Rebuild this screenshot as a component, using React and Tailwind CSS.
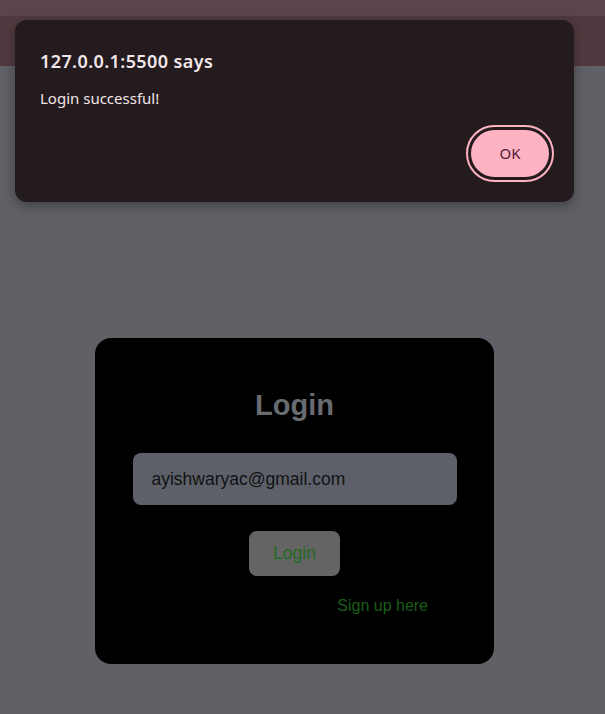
export default function App() {
  return (
    <div className="relative min-h-[714px] w-full overflow-hidden bg-[#5f6166]" style={{ fontFamily: '"Liberation Sans", Arial, sans-serif' }}>
      <div className="flex h-[66px] flex-col">
        <div className="h-[16px] bg-[#5b454b]" />
        <div className="flex-1 bg-[#513a3f]" />
      </div>

      <div className="pl-[95px] pt-[272px]">
        <div className="flex h-[326px] w-[399px] flex-col items-center rounded-[16px] bg-black">
          <h2 className="mt-[51px] text-[29px] font-bold leading-[33px] text-[#686b70]">Login</h2>
          <div className="mt-[31px] flex h-[52px] w-[324px] items-center rounded-[8px] bg-[#5d6068] pl-[19px] text-[17.5px] text-[#111214]">
            ayishwaryac@gmail.com
          </div>
          <div className="mt-[26px] flex h-[45px] w-[91px] items-center justify-center rounded-[8px] bg-[#646464] text-[17.5px] text-[#1f6b1f]">
            Login
          </div>
          <div className="mr-[66px] mt-[21px] self-end text-[16px] leading-[18px] text-[#1a5e1a]">Sign up here</div>
        </div>
      </div>

      <div
        className="absolute left-[15px] top-[20px] h-[182px] w-[559px] rounded-[12px] bg-[#231b1d] shadow-[0_4px_12px_rgba(0,0,0,0.35)]"
        style={{ fontFamily: '"Noto Sans", "Open Sans", sans-serif' }}
      >
        <div className="flex h-full flex-col pl-[25px] pr-[20px]">
          <div className="mt-[29px] text-[18px] font-semibold leading-[24px] tracking-[0.4px] text-[#f3e6ea]">127.0.0.1:5500 says</div>
          <div className="mt-[15px] text-[15px] leading-[20px] text-[#f3e6ea]">Login successful!</div>
          <div className="mt-auto mb-[20px] flex justify-end">
            <div className="flex h-[57px] w-[88px] items-center justify-center rounded-full border-[2px] border-[#ffb3c2] bg-[#231b1d] p-[3px]">
              <div className="flex h-full w-full items-center justify-center rounded-full bg-[#ffb3c2] text-[15px] text-[#4b1c36]">
                OK
              </div>
            </div>
          </div>
        </div>
      </div>
    </div>
  );
}
